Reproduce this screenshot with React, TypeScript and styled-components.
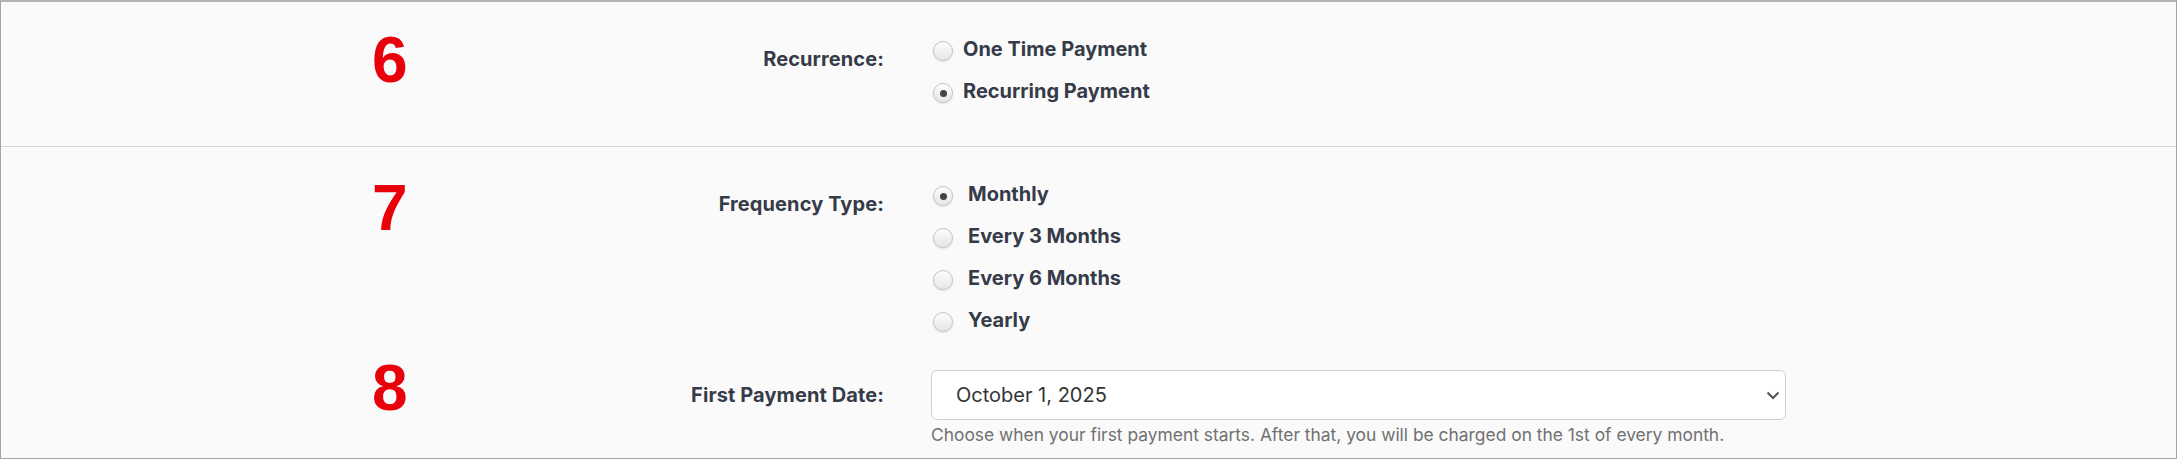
import styled, { createGlobalStyle } from "styled-components";

const GlobalStyle = createGlobalStyle`
  body {
    margin: 0;
    background: #ffffff;
    font-family: Inter, "Noto Sans", Arial, sans-serif;
  }
`;

const Frame = styled.div`
  width: 2177px;
  height: 459px;
  box-sizing: border-box;
  background: #fafafa;
  border: 1px solid #a4a4a4;
  border-top: 2px solid #b4b4b4;
  overflow: hidden;
`;

const Section = styled.section<{ $divider?: boolean }>`
  padding: 26px 0 ${(p) => (p.$divider ? "34px" : "0")};
  border-bottom: ${(p) => (p.$divider ? "1px solid #d6d6d6" : "none")};
`;

const Field = styled.div`
  display: grid;
  grid-template-columns: 140px 419px 855px;
  padding-left: 371px;
`;

const Marker = styled.div<{ $shift: number }>`
  font-family: "Liberation Sans", Arial, sans-serif;
  font-weight: 700;
  font-size: 64px;
  line-height: 1;
  color: #e8000b;
  margin-top: ${(p) => p.$shift}px;
`;

const Label = styled.div<{ $top?: number }>`
  box-sizing: border-box;
  padding-right: 47px;
  margin-top: ${(p) => p.$top ?? 10}px;
  text-align: right;
  font-size: 20px;
  font-weight: 700;
  line-height: 42px;
  letter-spacing: 0.1px;
  color: #353b48;
`;

const Options = styled.div`
  display: flex;
  flex-direction: column;
`;

const Option = styled.label<{ $gap: number }>`
  display: flex;
  align-items: center;
  gap: ${(p) => p.$gap}px;
  height: 42px;
  padding-left: 2px;
  font-size: 20px;
  font-weight: 700;
  color: #353b48;
`;

const Radio = styled.span<{ $checked?: boolean }>`
  box-sizing: border-box;
  width: 20px;
  height: 20px;
  margin-top: 4px;
  border-radius: 50%;
  border: 1px solid #c4c4c4;
  background: linear-gradient(#fdfdfd, #e6e6e6);
  box-shadow: 0 1px 2px rgba(0, 0, 0, 0.12);
  display: flex;
  align-items: center;
  justify-content: center;

  &::after {
    content: "";
    width: 7px;
    height: 7px;
    border-radius: 50%;
    background: #444;
    display: ${(p) => (p.$checked ? "block" : "none")};
  }
`;

const Control = styled.div`
  display: flex;
  flex-direction: column;
  padding-top: 29px;
`;

const SelectBox = styled.div`
  box-sizing: border-box;
  height: 50px;
  display: flex;
  align-items: center;
  justify-content: space-between;
  padding: 0 5px 0 24px;
  background: #ffffff;
  border: 1px solid #cfcfcf;
  border-radius: 6px;
  font-size: 20px;
  color: #343434;
`;

const Help = styled.div`
  margin-top: 3px;
  font-size: 17.4px;
  line-height: 24px;
  color: #717171;
`;

const Chevron = () => (
  <svg width="14" height="9" viewBox="0 0 14 9" fill="none">
    <path d="M1.5 1.5 L7 7 L12.5 1.5" stroke="#555" strokeWidth="2" />
  </svg>
);

const recurrence = [
  { text: "One Time Payment", checked: false },
  { text: "Recurring Payment", checked: true },
];

const frequency = [
  { text: "Monthly", checked: true },
  { text: "Every 3 Months", checked: false },
  { text: "Every 6 Months", checked: false },
  { text: "Yearly", checked: false },
];

function App() {
  return (
    <>
      <GlobalStyle />
      <Frame>
        <Section $divider>
          <Field>
            <Marker $shift={0}>6</Marker>
            <Label>Recurrence:</Label>
            <Options>
              {recurrence.map((item) => (
                <Option key={item.text} $gap={10}>
                  <Radio $checked={item.checked} />
                  {item.text}
                </Option>
              ))}
            </Options>
          </Field>
        </Section>
        <Section>
          <Field>
            <Marker $shift={3}>7</Marker>
            <Label>Frequency Type:</Label>
            <Options>
              {frequency.map((item) => (
                <Option key={item.text} $gap={15}>
                  <Radio $checked={item.checked} />
                  {item.text}
                </Option>
              ))}
            </Options>
          </Field>
          <Field>
            <Marker $shift={15}>8</Marker>
            <Label $top={33}>First Payment Date:</Label>
            <Control>
              <SelectBox>
                <span>October 1, 2025</span>
                <Chevron />
              </SelectBox>
              <Help>
                Choose when your first payment starts. After that, you will be
                charged on the 1st of every month.
              </Help>
            </Control>
          </Field>
        </Section>
      </Frame>
    </>
  );
}

export default App;
